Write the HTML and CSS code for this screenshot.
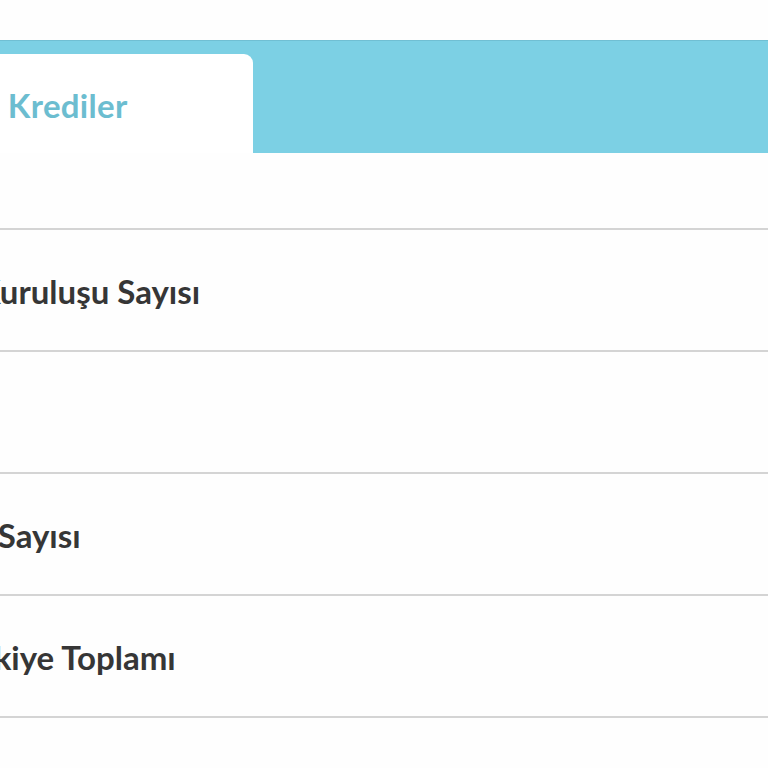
FILE: index.html
```html
<!DOCTYPE html>
<html lang="tr">
<head>
<meta charset="utf-8">
<title>Krediler</title>
<link rel="stylesheet" href="styles.css">
</head>
<body>
<div class="page">
  <div class="tabbar">
    <div class="tab"><span class="tab-label">Nakit Krediler</span></div>
  </div>
  <div class="table">
    <div class="row row-head"></div>
    <div class="row"><span class="label label-1">Kuruluşu Sayısı</span></div>
    <div class="row"></div>
    <div class="row"><span class="label label-3">Şube Sayısı</span></div>
    <div class="row"><span class="label label-4">Türkiye Toplamı</span></div>
    <div class="row row-last"></div>
  </div>
</div>
</body>
</html>
```

FILE: styles.css
```css
html, body {
  margin: 0;
  padding: 0;
  background: #fefefe;
}
body {
  font-family: "Lato", "Open Sans", sans-serif;
  overflow: hidden;
}
.page {
  padding-top: 40px;
}
.tabbar {
  background: #7cd0e4;
  height: 113px;
  display: flex;
  align-items: flex-end;
  border-top: 1px solid #70bfd3;
  box-sizing: border-box;
}
.tab {
  width: 253px;
  height: 99px;
  background: #ffffff;
  border-top-right-radius: 9px;
  display: flex;
  align-items: center;
  overflow: hidden;
}
.tab-label {
  font-weight: 700;
  font-size: 33px;
  letter-spacing: 0.3px;
  color: #6cbdd0;
  white-space: nowrap;
  margin-left: -82px;
  padding-top: 2px;
}
.table {
  display: flex;
  flex-direction: column;
}
.row {
  height: 122px;
  border-bottom: 2px solid #d4d4d4;
  box-sizing: border-box;
  display: flex;
  align-items: center;
  overflow: hidden;
}
.row-head {
  height: 77px;
}
.row-last {
  border-bottom: none;
}
.label {
  font-weight: 700;
  font-size: 33px;
  color: #363636;
  white-space: nowrap;
  padding-top: 2px;
}
.label-1 { margin-left: -22px; }
.label-3 { margin-left: -83px; }
.label-4 { margin-left: -54px; }
```
